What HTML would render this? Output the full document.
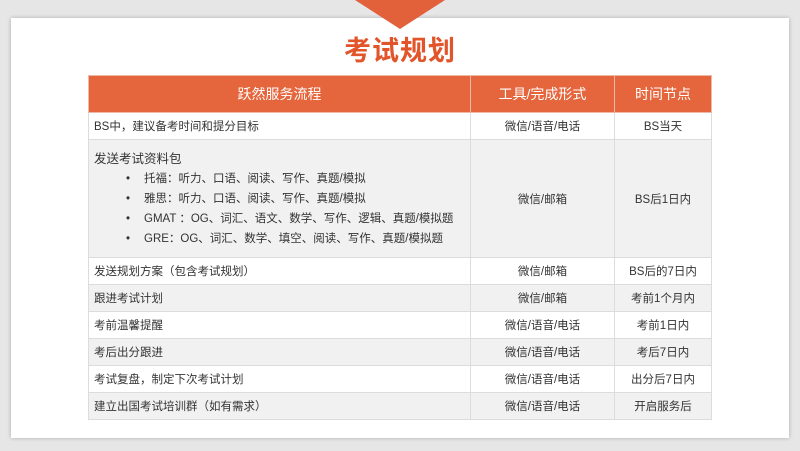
<!DOCTYPE html>
<html><head><meta charset="utf-8"><style>
body{margin:0;width:800px;height:451px;background:#e6e6e6;position:relative;overflow:hidden;font-family:"Liberation Sans","Noto Sans CJK SC",sans-serif;}
.card{position:absolute;left:11px;top:18px;width:778px;height:420px;background:#fff;box-shadow:0 0 4px rgba(0,0,0,.25);}
.tri{position:absolute;left:355px;top:0;width:0;height:0;border-left:45px solid transparent;border-right:45px solid transparent;border-top:29px solid #e2603a;}
.title{position:absolute;left:0;width:800px;top:33px;text-align:center;font-size:27px;font-weight:bold;color:#e2542a;letter-spacing:1px;line-height:36px;}
table{position:absolute;left:88px;top:75px;border-collapse:collapse;font-size:11.5px;color:#333;}
td,th{border:1px solid #dcdcdc;padding:0;}
th{background:#e5653c;color:#fff;font-weight:normal;font-size:14px;height:36px;border-color:#f0b9a5;}
td{height:26px;}
tr:nth-child(odd) td{background:#f1f1f1;}
td.l{padding-left:5px;}
td.c{text-align:center;}
ul{margin:2px 0 0 0;padding-left:50px;list-style:none;}
li{line-height:20px;position:relative;}
li:before{content:"•";position:absolute;left:-18px;}
</style></head><body>
<div class="card"></div>
<div class="tri"></div>
<div class="title">考试规划</div>
<table>
<tr><th style="width:381px">跃然服务流程</th><th style="width:143px">工具/完成形式</th><th style="width:96px">时间节点</th></tr>
<tr><td class="l">BS中，建议备考时间和提分目标</td><td class="c">微信/语音/电话</td><td class="c">BS当天</td></tr>
<tr><td class="l" style="height:117px"><div style="font-size:12.5px">发送考试资料包</div><ul>
<li>托福：听力、口语、阅读、写作、真题/模拟</li>
<li>雅思：听力、口语、阅读、写作、真题/模拟</li>
<li>GMAT ：OG、词汇、语文、数学、写作、逻辑、真题/模拟题</li>
<li>GRE：OG、词汇、数学、填空、阅读、写作、真题/模拟题</li></ul></td><td class="c">微信/邮箱</td><td class="c">BS后1日内</td></tr>
<tr><td class="l">发送规划方案（包含考试规划）</td><td class="c">微信/邮箱</td><td class="c">BS后的7日内</td></tr>
<tr><td class="l">跟进考试计划</td><td class="c">微信/邮箱</td><td class="c">考前1个月内</td></tr>
<tr><td class="l">考前温馨提醒</td><td class="c">微信/语音/电话</td><td class="c">考前1日内</td></tr>
<tr><td class="l">考后出分跟进</td><td class="c">微信/语音/电话</td><td class="c">考后7日内</td></tr>
<tr><td class="l">考试复盘，制定下次考试计划</td><td class="c">微信/语音/电话</td><td class="c">出分后7日内</td></tr>
<tr><td class="l">建立出国考试培训群（如有需求）</td><td class="c">微信/语音/电话</td><td class="c">开启服务后</td></tr>
</table>
</body></html>
